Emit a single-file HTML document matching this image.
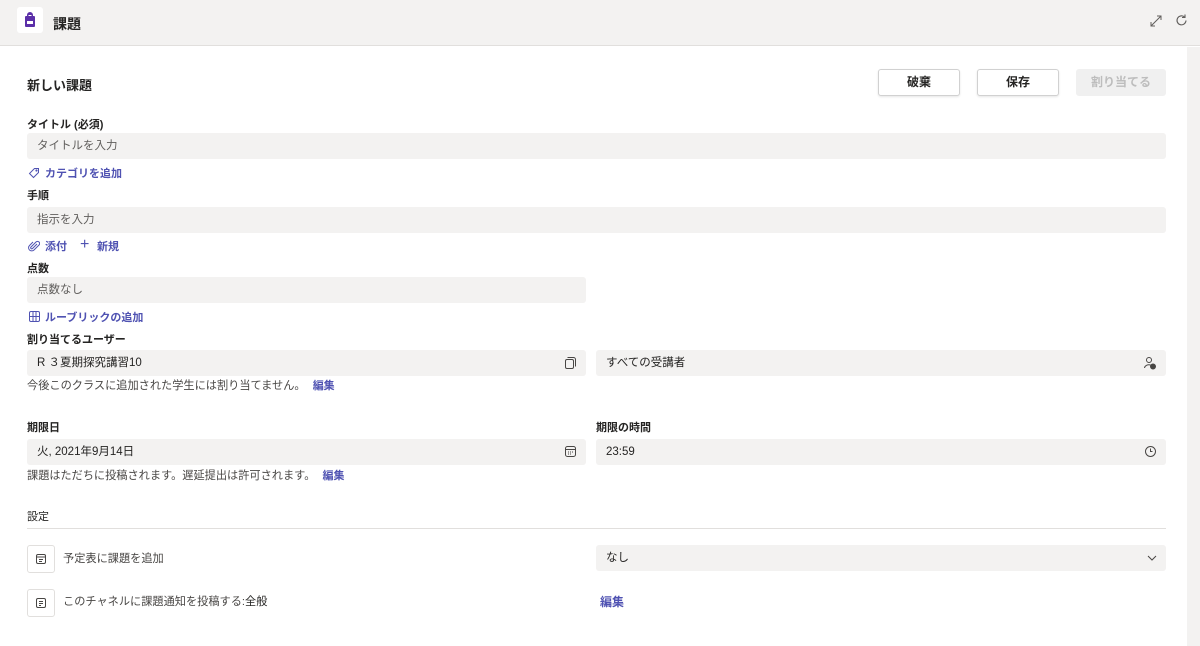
<!DOCTYPE html>
<html><head><meta charset="utf-8"><style>
*{box-sizing:border-box;margin:0;padding:0}
body{width:1200px;height:646px;overflow:hidden;background:#fff;font-family:"Liberation Sans","Noto Sans CJK JP",sans-serif;color:#252423;position:relative}
.a{position:absolute}
.hdr{left:0;top:0;width:1200px;height:46px;background:#f3f2f1;border-bottom:1px solid #e1dfdd}
.lbl{font-size:11px;font-weight:bold;color:#252423;line-height:14px}
.inp{background:#f3f2f1;border-radius:3px;height:26px;font-size:11.5px;color:#605e5c;line-height:26px;padding-left:10px}
.inp.d{color:#252423}
.lnk{font-size:11px;font-weight:bold;color:#4f52b2;line-height:14px}
.btn{height:27px;border:1px solid #d1d1d1;border-radius:3px;font-size:12px;font-weight:bold;text-align:center;line-height:25px;background:#fff;box-shadow:0 1px 2px rgba(0,0,0,.1)}
.txt{font-size:11.2px;color:#484644;line-height:16px}
.ic{position:absolute;right:9px;top:6px}
.sq{width:28px;height:28px;border:1px solid #e1dfdd;border-radius:3px;background:#fff}
</style></head><body>
<div class="a hdr"></div>
<div class="a" style="left:17px;top:7px;width:26px;height:26px;background:#fff;border-radius:3px"></div>
<svg class="a" style="left:22px;top:12px" width="16" height="16" viewBox="0 0 16 16"><path d="M5 3a3 3 0 0 1 6 0v1h1a1 1 0 0 1 1 1v9a1 1 0 0 1-1 1H4a1 1 0 0 1-1-1V5a1 1 0 0 1 1-1h1z" fill="#5b2fa8"/><rect x="5" y="9" width="6" height="3" fill="#fff"/><rect x="6.5" y="3" width="3" height="1" fill="#fff"/></svg>
<div class="a" style="left:53px;top:14px;font-size:14px;font-weight:bold">課題</div>
<svg class="a" style="left:1149px;top:14px" width="14" height="14" viewBox="0 0 14 14" fill="none" stroke="#605e5c" stroke-width="1"><path d="M2 12L12 2M8 2h4v4M2 8v4h4"/></svg>
<svg class="a" style="left:1174px;top:13px" width="15" height="15" viewBox="0 0 15 15" fill="none" stroke="#605e5c" stroke-width="1.1"><path d="M12 7.5A4.5 4.5 0 1 1 10.5 4M11 1.5V4.5H8"/></svg>
<div class="a" style="left:1187px;top:47px;width:13px;height:599px;background:#f3f2f1"></div>

<div class="a" style="left:27px;top:75px;font-size:13px;font-weight:bold">新しい課題</div>
<div class="a btn" style="left:878px;top:69px;width:82px">破棄</div>
<div class="a btn" style="left:977px;top:69px;width:82px">保存</div>
<div class="a btn" style="left:1076px;top:69px;width:90px;background:#f0f0f0;border-color:#f0f0f0;color:#bdbdbd;box-shadow:none">割り当てる</div>

<div class="a lbl" style="left:27px;top:118px">タイトル (必須)</div>
<div class="a inp" style="left:27px;top:133px;width:1139px">タイトルを入力</div>
<svg class="a" style="left:28px;top:167px" width="12" height="12" viewBox="0 0 12 12" fill="none" stroke="#4f52b2"><path d="M6.5 1.5h4v4l-5 5-4-4z"/><circle cx="8.5" cy="3.5" r=".6"/></svg>
<div class="a lnk" style="left:45px;top:167px">カテゴリを追加</div>

<div class="a lbl" style="left:27px;top:189px">手順</div>
<div class="a inp" style="left:27px;top:207px;width:1139px">指示を入力</div>
<svg class="a" style="left:28px;top:240px" width="12" height="12" viewBox="0 0 12 12" fill="none" stroke="#4f52b2"><path d="M9 4l-4.5 4.5a1 1 0 0 1-1.5-1.5L8 2a2 2 0 0 1 3 3l-5 5a3 3 0 0 1-4.5-4.5L5 2"/></svg>
<div class="a lnk" style="left:45px;top:240px">添付</div>
<div class="a" style="left:80px;top:236px;font-size:16px;color:#4f52b2">+</div>
<div class="a lnk" style="left:97px;top:240px">新規</div>

<div class="a lbl" style="left:27px;top:262px">点数</div>
<div class="a inp" style="left:27px;top:277px;width:559px">点数なし</div>
<svg class="a" style="left:28px;top:310px" width="13" height="13" viewBox="0 0 13 13" fill="none" stroke="#4f52b2"><rect x="1.5" y="1.5" width="10" height="10" rx="1.5"/><path d="M1.5 6.5h10M5 1.5v10M8 1.5v10"/></svg>
<div class="a lnk" style="left:45px;top:311px">ルーブリックの追加</div>

<div class="a lbl" style="left:27px;top:333px">割り当てるユーザー</div>
<div class="a inp d" style="left:27px;top:350px;width:559px">R ３夏期探究講習10
<svg class="ic" width="14" height="14" viewBox="0 0 14 14" fill="none" stroke="#484644"><rect x="2.5" y="3.5" width="8" height="9" rx="1.5"/><path d="M4.5 1.5h6a2 2 0 0 1 2 2v7"/></svg></div>
<div class="a inp d" style="left:596px;top:350px;width:570px">すべての受講者
<svg class="ic" width="14" height="14" viewBox="0 0 14 14" fill="none" stroke="#484644"><circle cx="6" cy="4" r="2.5"/><path d="M1.5 12a4.5 3.5 0 0 1 6-3"/><circle cx="10" cy="10.5" r="2.5" fill="#484644"/></svg></div>
<div class="a txt" style="left:27px;top:378px">今後このクラスに追加された学生には割り当てません。 <span class="lnk" style="margin-left:4px">編集</span></div>

<div class="a lbl" style="left:27px;top:421px">期限日</div>
<div class="a lbl" style="left:596px;top:421px">期限の時間</div>
<div class="a inp d" style="left:27px;top:439px;width:559px">火, 2021年9月14日
<svg class="ic" width="13" height="13" viewBox="0 0 13 13" fill="none" stroke="#484644"><rect x="1.5" y="1.5" width="10" height="10" rx="2"/><path d="M1.5 4.5h10M4 7h1M6 7h1M8 7h1M4 9h1M6 9h1"/></svg></div>
<div class="a inp d" style="left:596px;top:439px;width:570px">23:59
<svg class="ic" width="13" height="13" viewBox="0 0 13 13" fill="none" stroke="#484644"><circle cx="6.5" cy="6.5" r="5"/><path d="M6.5 3.5v3h2"/></svg></div>
<div class="a txt" style="left:27px;top:468px">課題はただちに投稿されます。遅延提出は許可されます。 <span class="lnk" style="margin-left:4px">編集</span></div>

<div class="a lbl" style="left:27px;top:510px;font-weight:normal;color:#252423">設定</div>
<div class="a" style="left:27px;top:528px;width:1139px;height:1px;background:#e1dfdd"></div>
<div class="a sq" style="left:27px;top:545px"></div>
<svg class="a" style="left:35px;top:553px" width="12" height="12" viewBox="0 0 12 12" fill="none" stroke="#484644"><rect x="1.5" y="1.5" width="9" height="9" rx="1.5"/><path d="M1.5 4h9M4 6.5h4M4 8.5h3"/></svg>
<div class="a txt" style="left:63px;top:551px">予定表に課題を追加</div>
<div class="a inp d" style="left:596px;top:545px;width:570px">なし
<svg class="ic" style="top:9px" width="10" height="8" viewBox="0 0 10 8" fill="none" stroke="#484644"><path d="M1 2l4 4 4-4"/></svg></div>
<div class="a sq" style="left:27px;top:589px"></div>
<svg class="a" style="left:35px;top:597px" width="12" height="12" viewBox="0 0 12 12" fill="none" stroke="#484644"><rect x="1.5" y="1.5" width="9" height="9" rx="1.5"/><path d="M4 4.5h4M4 6.5h4M4 8.5h2"/></svg>
<div class="a txt" style="left:63px;top:594px">このチャネルに課題通知を投稿する:<span style="color:#252423">全般</span></div>
<div class="a lnk" style="left:600px;top:595px;font-size:12px">編集</div>
</body></html>
